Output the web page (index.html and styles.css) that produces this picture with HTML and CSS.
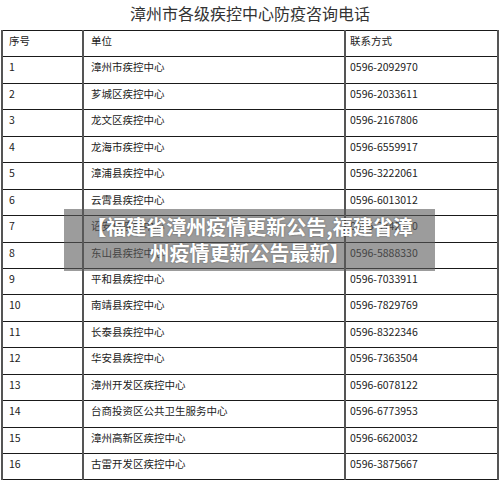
FILE: index.html
```html
<!DOCTYPE html>
<html lang="zh-CN">
<head>
<meta charset="utf-8">
<link rel="stylesheet" href="styles.css">
</head>
<body>
<div class="page">
  <h1 class="title">漳州市各级疾控中心防疫咨询电话</h1>
  <table class="tbl">
    <colgroup><col class="c1"><col class="c2"><col class="c3"></colgroup>
    <tr><td>序号</td><td>单位</td><td>联系方式</td></tr>
    <tr><td>1</td><td>漳州市疾控中心</td><td>0596-2092970</td></tr>
    <tr><td>2</td><td>芗城区疾控中心</td><td>0596-2033611</td></tr>
    <tr><td>3</td><td>龙文区疾控中心</td><td>0596-2167806</td></tr>
    <tr><td>4</td><td>龙海市疾控中心</td><td>0596-6559917</td></tr>
    <tr><td>5</td><td>漳浦县疾控中心</td><td>0596-3222061</td></tr>
    <tr><td>6</td><td>云霄县疾控中心</td><td>0596-6013012</td></tr>
    <tr><td>7</td><td>诏安县疾控中心</td><td>0596-3442300</td></tr>
    <tr><td>8</td><td>东山县疾控中心</td><td>0596-5888330</td></tr>
    <tr><td>9</td><td>平和县疾控中心</td><td>0596-7033911</td></tr>
    <tr><td>10</td><td>南靖县疾控中心</td><td>0596-7829769</td></tr>
    <tr><td>11</td><td>长泰县疾控中心</td><td>0596-8322346</td></tr>
    <tr><td>12</td><td>华安县疾控中心</td><td>0596-7363504</td></tr>
    <tr><td>13</td><td>漳州开发区疾控中心</td><td>0596-6078122</td></tr>
    <tr><td>14</td><td>台商投资区公共卫生服务中心</td><td>0596-6773953</td></tr>
    <tr><td>15</td><td>漳州高新区疾控中心</td><td>0596-6620032</td></tr>
    <tr><td>16</td><td>古雷开发区疾控中心</td><td>0596-3875667</td></tr>
  </table>
  <div class="overlay">
    <p class="overlay-text">【福建省漳州疫情更新公告,福建省漳<br>州疫情更新公告最新】</p>
  </div>
</div>
</body>
</html>
```
FILE: styles.css
```css
html, body {
  margin: 0;
  padding: 0;
  background: #fff;
}
.page {
  position: relative;
  width: 500px;
  height: 482px;
  overflow: hidden;
  font-family: "Noto Sans CJK SC", "Noto Sans", sans-serif;
  color: #222;
}
.title {
  margin: 0;
  height: 30px;
  line-height: 26px;
  text-align: center;
  font-size: 16px;
  font-weight: normal;
  color: #333;
  letter-spacing: 0;
}
.tbl {
  margin-left: 1px;
  border-collapse: collapse;
  table-layout: fixed;
  width: 496px;
}
.c1 { width: 81px; }
.c2 { width: 262px; }
.c3 { width: 153px; }
.tbl tr {
  height: 26.45px;
}
.tbl td {
  border-top: 1px solid #1a1a1a;
  border-bottom: 1px solid #1a1a1a;
  border-left: 2px solid #555;
  border-right: 2px solid #555;
  vertical-align: top;
  padding: 2px 6px 0 6px;
  font-size: 10.5px;
  line-height: 16px;
  color: #222;
  white-space: nowrap;
}
.tbl td:nth-child(2) { padding-left: 7px; }
.tbl td:nth-child(3) { padding-left: 4px; }
.overlay {
  position: absolute;
  left: 64px;
  top: 209px;
  width: 371px;
  height: 62px;
  background: rgba(90, 90, 90, 0.6);
  display: flex;
  align-items: center;
  justify-content: center;
}
.overlay-text {
  margin: 0;
  text-align: center;
  color: #fff;
  font-weight: bold;
  font-size: 20px;
  line-height: 26px;
  text-shadow: 0 0 2px rgba(0,0,0,0.4);
}
```
